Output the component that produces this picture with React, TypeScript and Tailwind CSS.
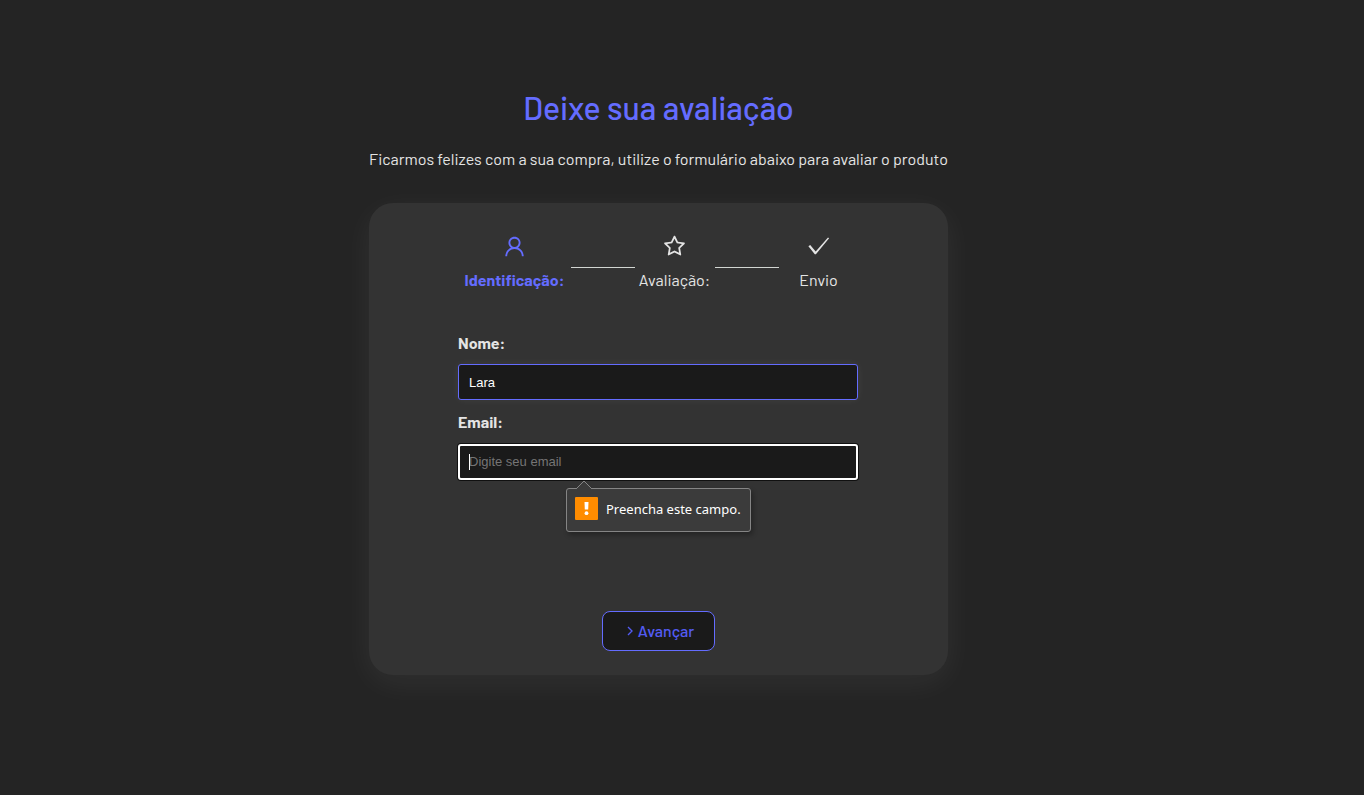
import { useState } from "react";
import type { ReactNode } from "react";
import { AiOutlineUser, AiOutlineStar } from "react-icons/ai";
import { GrFormNext } from "react-icons/gr";

function Step({ label, icon, active = false, wide = false }: { label: string; icon: ReactNode; active?: boolean; wide?: boolean }) {
  return (
    <li
      className={`flex flex-col items-center gap-[9px] leading-6 ${wide ? "w-28" : "w-20"} ${active ? "font-bold text-[#646cff]" : "text-[#e4e4e4]"}`}
    >
      {icon}
      <p>{label}</p>
    </li>
  );
}

function Line() {
  return <li aria-hidden="true" className="mt-[33px] h-px w-16 bg-[#d2d6d2]" />;
}

export default function App() {
  const [name, setName] = useState("Lara");
  const [email, setEmail] = useState("");
  const field =
    "h-9 w-full rounded-[3px] bg-[#1a1a1a] font-['Liberation_Sans',Arial,sans-serif] text-[13px] text-white outline-none placeholder:text-[#757575]";

  return (
    <main className="flex min-h-screen flex-col items-center bg-[#242424] pt-[84px] pr-[47px] font-['Barlow',Roboto,sans-serif] text-[16px] text-[#e4e4e4]">
      <div className="flex w-full max-w-[579px] flex-col">
        <header className="text-center">
          <h1 className="text-[32px] leading-[46px] font-medium text-[#646cff]">Deixe sua avaliação</h1>
          <p className="mt-[17px] leading-6 whitespace-nowrap">
            Ficarmos felizes com a sua compra, utilize o formulário abaixo para avaliar o produto
          </p>
        </header>

        <section className="mt-8 flex flex-col items-start rounded-3xl bg-[#333333] px-[89px] pt-[31px] pb-6 shadow-[0_8px_32px_rgba(255,255,255,0.06)]">
          <ol className="flex self-center">
            <Step wide active label="Identificação:" icon={<AiOutlineUser className="size-[25px]" />} />
            <Line />
            <Step label="Avaliação:" icon={<AiOutlineStar className="size-[25px]" />} />
            <Line />
            <Step
              label="Envio"
              icon={
                <svg viewBox="0 0 25 25" className="size-[25px]" fill="currentColor">
                  <path d="M2.4 12.2 4.2 11l5.5 6.5L22 3.5l1.1.8L9.9 20.3H8.8z" />
                </svg>
              }
            />
          </ol>

          <form className="mt-[39px] flex w-full max-w-[400px] flex-col items-center" onSubmit={(e) => e.preventDefault()} noValidate>
            <div className="flex min-h-[236px] w-full flex-col">
              <label htmlFor="name" className="mb-[9px] leading-6 font-bold">
                Nome:
              </label>
              <input
                id="name"
                className={`${field} border border-[#646cff] px-2.5 shadow-[0_0_8px_rgba(255,255,255,0.06)]`}
                placeholder="Digite seu nome"
                value={name}
                onChange={(e) => setName(e.target.value)}
              />
              <label htmlFor="email" className="mt-2.5 mb-2.5 leading-6 font-bold">
                Email:
              </label>
              <div className="relative">
                <input
                  id="email"
                  type="email"
                  className={`${field} border-2 border-white px-[9px] pb-0.5 shadow-[0_0_0_1px_#101010]`}
                  placeholder="Digite seu email"
                  value={email}
                  onChange={(e) => setEmail(e.target.value)}
                />
                <span aria-hidden="true" className="absolute top-2.5 left-[11px] h-4 w-px bg-white" />
                <div
                  role="alert"
                  className="absolute top-11 left-[108px] flex h-11 w-[185px] items-center gap-2 rounded-[3px] border border-[#858585] bg-[#3b3b3b] px-2 font-['Noto_Sans',sans-serif] text-[13px] whitespace-nowrap text-white shadow-[2px_3px_5px_rgba(0,0,0,0.3)]"
                >
                  <svg viewBox="0 0 18 9" className="absolute -top-[9px] left-2 h-[9px] w-[18px]">
                    <path d="M1 9 9 1l8 8" fill="#3b3b3b" stroke="#858585" />
                  </svg>
                  <svg viewBox="0 0 23 23" className="-mt-1 size-[23px]">
                    <rect width="23" height="23" rx="1" fill="#ff8c00" />
                    <path d="M9.5 5h4l-.3 7.5h-3.4z" fill="#fff" />
                    <circle cx="11.5" cy="16.2" r="1.9" fill="#fff" />
                  </svg>
                  <span>Preencha este campo.</span>
                </div>
              </div>
            </div>

            <button
              type="submit"
              className="mt-11 flex h-10 w-[113px] items-center justify-center rounded-lg border border-[#646cff] bg-[#1a1a1a] font-medium text-[#535bf2]"
            >
              <GrFormNext className="size-4" />
              <span>Avançar</span>
            </button>
          </form>
        </section>
      </div>
    </main>
  );
}
